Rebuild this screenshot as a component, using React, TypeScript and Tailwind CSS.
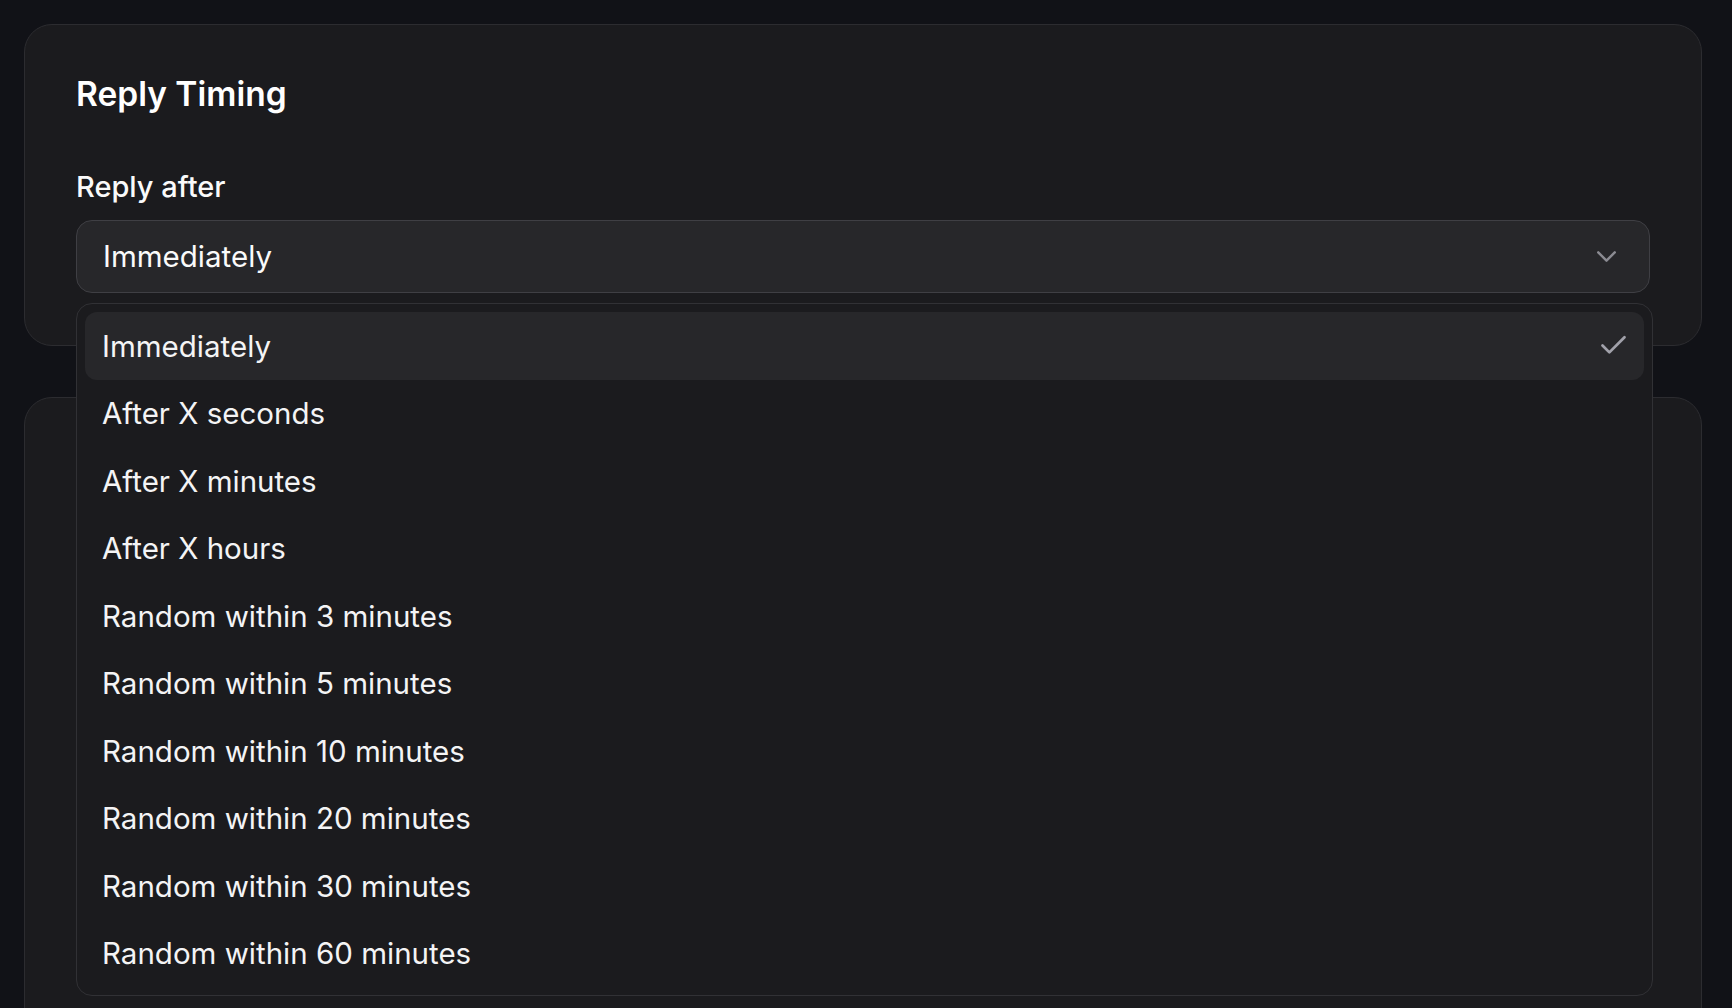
import React, { useState } from 'react';
import { Check, ChevronDown } from 'lucide-react';

const options = [
  'Immediately',
  'After X seconds',
  'After X minutes',
  'After X hours',
  'Random within 3 minutes',
  'Random within 5 minutes',
  'Random within 10 minutes',
  'Random within 20 minutes',
  'Random within 30 minutes',
  'Random within 60 minutes',
];

const TimingSelect: React.FC = () => {
  const [value, setValue] = useState(options[0]);
  const [open, setOpen] = useState(true);

  return (
    <div className="relative mt-[15.5px]">
      <button
        onClick={() => setOpen(!open)}
        className="flex h-[73px] w-full items-center justify-between rounded-2xl border border-[#3f3f44] bg-[#27272a] pl-[26px] pr-[26px] text-left text-[29.5px] text-[#fafafa]"
      >
        <span>{value}</span>
        <ChevronDown size={33} strokeWidth={1.75} className="text-[#8b8b92]" />
      </button>

      {open && (
        <div className="absolute left-0 right-[-3px] top-[83px] z-10 rounded-2xl border border-[#313135] bg-[#1b1b1e] p-2">
          {options.map(opt => (
            <div
              key={opt}
              onClick={() => {
                setValue(opt);
                setOpen(false);
              }}
              className={`flex h-[67.5px] cursor-pointer items-center justify-between rounded-xl pl-[17px] pr-[14px] text-[29.5px] text-[#f4f4f5] ${opt === value ? 'bg-[#27272a]' : ''}`}
            >
              <span>{opt}</span>
              {opt === value && <Check size={33} strokeWidth={2} className="text-[#a1a1aa]" />}
            </div>
          ))}
        </div>
      )}
    </div>
  );
};

export default function App() {
  return (
    <div className="h-screen overflow-hidden bg-[#111217] pl-6 pr-[30px] pt-6 font-['Inter',sans-serif]">
      <div className="rounded-[28px] border border-[#2c2c30] bg-[#1b1b1e] px-[51px] pt-[49px] pb-[52px]">
        <h2 className="text-[33.5px] leading-[40px] font-semibold text-white">Reply Timing</h2>
        <label className="mt-[54.5px] block text-[29px] leading-[36px] font-medium text-[#fafafa]">Reply after</label>
        <TimingSelect />
      </div>
      <div className="mt-[51px] h-[700px] rounded-[28px] border border-[#2c2c30] bg-[#1b1b1e]" />
    </div>
  );
}
